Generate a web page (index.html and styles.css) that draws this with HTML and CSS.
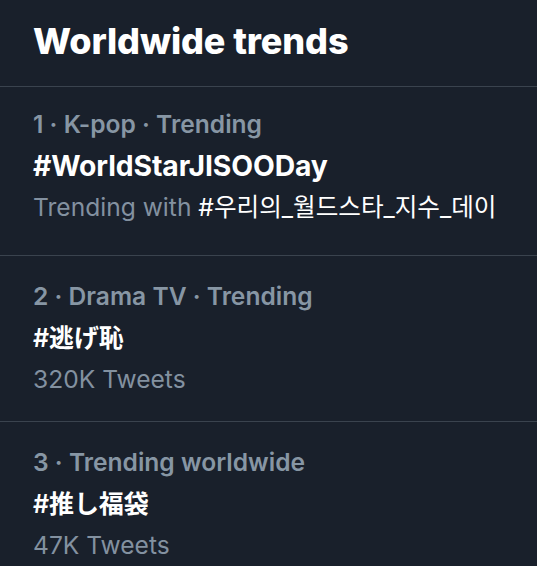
FILE: index.html
```html
<!DOCTYPE html>
<html lang="en">
<head>
<meta charset="utf-8">
<link rel="stylesheet" href="styles.css">
</head>
<body>
<div class="panel">
  <h1 class="title">Worldwide trends</h1>
  <div class="trend trend-first">
    <div class="meta">1 · K-pop · Trending</div>
    <div class="tag">#WorldStarJISOODay</div>
    <div class="sub">Trending with <span class="with" lang="ko">#우리의_월드스타_지수_데이</span></div>
  </div>
  <div class="trend">
    <div class="meta">2 · Drama TV · Trending</div>
    <div class="tag tag-ja" lang="ja">#逃げ恥</div>
    <div class="sub">320K Tweets</div>
  </div>
  <div class="trend">
    <div class="meta">3 · Trending worldwide</div>
    <div class="tag tag-ja" lang="ja">#推し福袋</div>
    <div class="sub">47K Tweets</div>
  </div>
</div>
</body>
</html>
```
FILE: styles.css
```css
html, body {
  margin: 0;
  padding: 0;
  background: #19202b;
}
body {
  font-family: Inter, "Noto Sans CJK JP", "Noto Sans CJK KR", sans-serif;
  color: #ffffff;
  width: 537px;
  height: 566px;
  overflow: hidden;
}
.panel {
  display: flex;
  flex-direction: column;
}
.title {
  margin: 0;
  padding: 19px 33px 23px;
  font-size: 36px;
  font-weight: 800;
  line-height: 44px;
  letter-spacing: -0.1px;
  border-bottom: 1px solid #3a434e;
}
.trend {
  padding: 20px 33px 23px;
  border-bottom: 1px solid #3a434e;
  display: flex;
  flex-direction: column;
}
.trend-first {
  padding-top: 17px;
  padding-bottom: 29px;
}
.meta {
  font-size: 24.6px;
  font-weight: 600;
  color: #8796a4;
  line-height: 40px;
  white-space: nowrap;
}
.tag {
  font-size: 28.3px;
  font-weight: 700;
  line-height: 44px;
  letter-spacing: -0.1px;
  white-space: nowrap;
}
.tag-ja {
  font-family: Inter, "Noto Sans CJK JP", sans-serif;
  font-size: 25px;
  font-weight: 600;
}
.sub {
  font-size: 24.6px;
  font-weight: 400;
  color: #8391a0;
  line-height: 38px;
  white-space: nowrap;
}
.with {
  color: #ffffff;
  font-family: Inter, "Noto Sans CJK KR", sans-serif;
}
```
